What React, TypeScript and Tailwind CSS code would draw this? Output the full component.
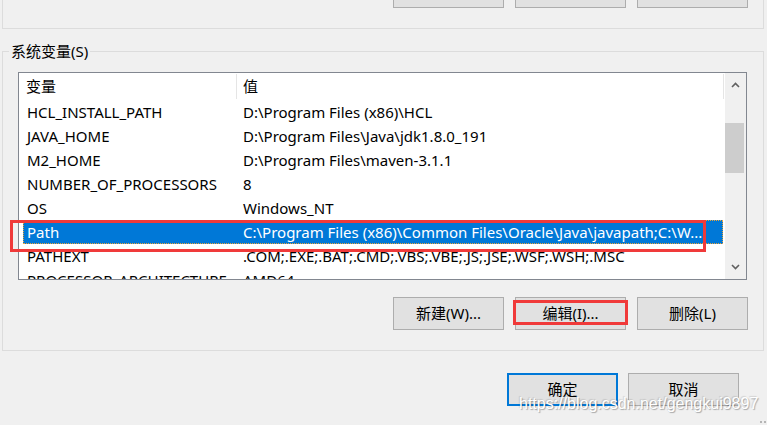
const vars = [
  { name: 'HCL_INSTALL_PATH', value: 'D:\\Program Files (x86)\\HCL' },
  { name: 'JAVA_HOME', value: 'D:\\Program Files\\Java\\jdk1.8.0_191' },
  { name: 'M2_HOME', value: 'D:\\Program Files\\maven-3.1.1' },
  { name: 'NUMBER_OF_PROCESSORS', value: '8' },
  { name: 'OS', value: 'Windows_NT' },
  { name: 'Path', value: 'C:\\Program Files (x86)\\Common Files\\Oracle\\Java\\javapath;C:\\W...' },
  { name: 'PATHEXT', value: '.COM;.EXE;.BAT;.CMD;.VBS;.VBE;.JS;.JSE;.WSF;.WSH;.MSC' },
  { name: 'PROCESSOR_ARCHITECTURE', value: 'AMD64' },
]

function Button({ label, primary }: { label: string; primary?: boolean }) {
  return (
    <button
      type="button"
      className={
        'h-[33px] w-[111px] shrink-0 bg-[#e1e1e1] text-center leading-none text-black ' +
        (primary ? 'border-2 border-[#0078d7]' : 'border border-[#adadad]')
      }
    >
      {label}
    </button>
  )
}

export default function App() {
  return (
    <div className="relative h-[425px] w-[767px] overflow-hidden bg-[#f0f0f0] font-['Noto_Sans','Noto_Sans_CJK_SC',sans-serif] text-[15px] text-black">
      {/* user variables group, mostly scrolled off the top */}
      <div className="ml-[2px] mr-[3px] flex h-[29px] flex-col border border-t-0 border-[#dcdcdc]">
        <div className="-mt-[25px] flex justify-end gap-[11px] pr-[15px]">
          <button type="button" className="h-[33px] w-[111px] border border-[#adadad] bg-[#e1e1e1]">新建(N)...</button>
          <button type="button" className="h-[33px] w-[111px] border border-[#adadad] bg-[#e1e1e1]">编辑(E)...</button>
          <button type="button" className="h-[33px] w-[111px] border border-[#adadad] bg-[#e1e1e1]">删除(D)</button>
        </div>
      </div>

      <fieldset className="ml-[2px] mr-[3px] mt-[12px] h-[310px] border border-[#dcdcdc]">
        <legend className="ml-[6px] px-[2px] leading-[20px]">系统变量(S)</legend>

        <div className="relative ml-[15px] mr-[16px] mt-[11px]">
          <div className="flex h-[208px] border border-[#828790] bg-white">
            <div className="min-w-0 flex-1 overflow-hidden">
              <div className="flex h-[27px] items-center">
                <div className="flex h-[25px] w-[218px] shrink-0 items-center border-r border-[#e5e5e5] pl-[7px]">变量</div>
                <div className="flex h-[25px] w-[487px] shrink-0 items-center border-r border-[#e5e5e5] pl-[6px]">值</div>
              </div>
              {vars.map((v) => {
                const selected = v.name === 'Path'
                return (
                  <div
                    key={v.name}
                    className={
                      'ml-[4px] flex h-[24px] w-[700px] items-center whitespace-nowrap ' +
                      (selected ? 'bg-[#0078d7] text-white outline-1 -outline-offset-1 outline-dotted outline-[#e8a33a]' : '')
                    }
                  >
                    <div className="w-[213px] shrink-0 overflow-hidden pl-[4px]">{v.name}</div>
                    <div className="min-w-0 flex-1 overflow-hidden pl-[7px]">{v.value}</div>
                  </div>
                )
              })}
            </div>

            {/* scrollbar */}
            <div className="flex w-[21px] shrink-0 flex-col bg-[#f0f0f0]">
              <div className="flex h-[24px] items-center justify-center pr-px">
                <svg width="9" height="6" viewBox="0 0 9 6">
                  <path d="M1 5 L4.5 1.5 L8 5" fill="none" stroke="#606060" strokeWidth="1.6" />
                </svg>
              </div>
              <div className="flex-1">
                <div className="mt-[26px] h-[50px] w-[19px] bg-[#cdcdcd]" />
              </div>
              <div className="flex h-[24px] items-center justify-center pr-px">
                <svg width="9" height="6" viewBox="0 0 9 6">
                  <path d="M1 1 L4.5 4.5 L8 1" fill="none" stroke="#606060" strokeWidth="1.6" />
                </svg>
              </div>
            </div>
          </div>

          {/* annotation around the selected row */}
          <div className="pointer-events-none absolute -left-[8px] top-[148px] h-[32px] w-[696px] border-[3px] border-[#f03a3a]" />
        </div>

        <div className="mt-[17px] flex justify-end gap-[11px] pr-[15px]">
          <button type="button" className="h-[33px] w-[111px] border border-[#adadad] bg-[#e1e1e1]">新建(W)...</button>
          <div className="relative">
            <button type="button" className="h-[33px] w-[111px] border border-[#adadad] bg-[#e1e1e1]">编辑(I)...</button>
            <div className="pointer-events-none absolute -left-[2px] -right-[2px] top-[3px] bottom-[5px] border-[3px] border-[#f03a3a]" />
          </div>
          <button type="button" className="h-[33px] w-[111px] border border-[#adadad] bg-[#e1e1e1]">删除(L)</button>
        </div>
      </fieldset>

      <div className="mt-[22px] flex justify-end gap-[10px] pr-[28px]">
        <Button label="确定" primary />
        <Button label="取消" />
      </div>

      {/* size grip */}
      <svg className="absolute bottom-0 right-0" width="8" height="6" viewBox="0 0 8 6">
        <rect x="1" y="2" width="2" height="2" fill="#b5b5b5" />
        <rect x="5" y="2" width="2" height="2" fill="#b5b5b5" />
      </svg>

      {/* watermark */}
      <div className="pointer-events-none absolute left-[519px] top-[394px] font-['Liberation_Sans',Arial,sans-serif] text-[16px] leading-[20px] text-white [text-shadow:1px_1px_1px_rgba(0,0,0,0.3),-1px_-1px_1px_rgba(0,0,0,0.12)]">
        https://blog.csdn.net/gengkui9897
      </div>
    </div>
  )
}
